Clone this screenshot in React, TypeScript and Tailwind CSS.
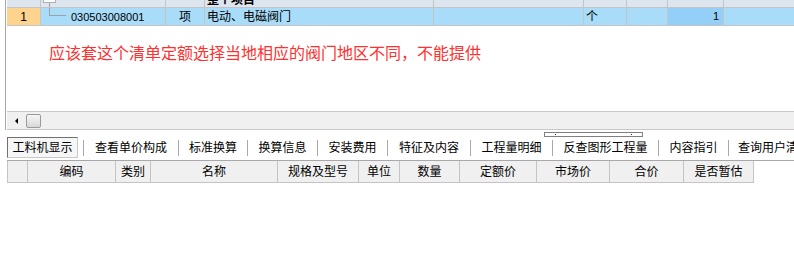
const tabs = [
  { label: "查看单价构成", w: "w-[94px]" },
  { label: "标准换算", w: "w-[68px]" },
  { label: "换算信息", w: "w-[69px]" },
  { label: "安装费用", w: "w-[69px]" },
  { label: "特征及内容", w: "w-[82px]" },
  { label: "工程量明细", w: "w-[81px]" },
  { label: "反查图形工程量", w: "w-[105px]" },
  { label: "内容指引", w: "w-[69px]" },
];

const gridCols = [
  { label: "", w: "w-[20px]" },
  { label: "编码", w: "w-[88px]" },
  { label: "类别", w: "w-[35px]" },
  { label: "名称", w: "w-[127px]" },
  { label: "规格及型号", w: "w-[81px]" },
  { label: "单位", w: "w-[41px]" },
  { label: "数量", w: "w-[60px]" },
  { label: "定额价", w: "w-[77px]" },
  { label: "市场价", w: "w-[73px]" },
  { label: "合价", w: "w-[74px]" },
  { label: "是否暂估", w: "w-[70px]" },
];

const cell = "h-full border-r border-[#c4c4c4] shrink-0";

function TopGrid() {
  return (
    <div className="ml-[5px] border-l border-[#a8a8a8] pl-[1px] h-[130px] flex flex-col overflow-hidden">
      {/* header row, only its lower edge shows */}
      <div className="-mt-[12px] h-[20px] flex bg-[#dde5ef] border-b border-[#c4c4c4] shrink-0">
        <div className={`${cell} w-[34px]`} />
        <div className={`${cell} w-[125px] flex items-end`}>
          <div className="ml-[2px] flex flex-col items-center">
            <div className="w-[13px] h-[11px] border border-[#b0b0b0] bg-[#fafafa]" />
            <div className="w-px h-[4px] bg-[#a0a0a0]" />
          </div>
        </div>
        <div className={`${cell} w-[39px]`} />
        <div className={`${cell} w-[229px] flex items-end pl-[2px] text-[12px] font-bold leading-none pb-[1px]`}>
          整个项目
        </div>
        <div className={`${cell} w-[150px]`} />
        <div className={`${cell} w-[43px]`} />
        <div className={`${cell} w-[41px]`} />
        <div className={`${cell} w-[56px]`} />
        <div className="flex-1" />
      </div>

      {/* selected data row */}
      <div className="h-[18px] flex bg-[#a9dcf8] border-b border-[#c4c4c4] shrink-0 text-[12px] text-black">
        <div className={`${cell} w-[34px] bg-[#fdd38d] flex items-center justify-center`}>1</div>
        <div className={`${cell} w-[125px] flex items-start`}>
          <div className="ml-[8px] w-[17px] h-[8px] border-l border-b border-[#a0a0a0]" />
          <span className="ml-[5px] mt-[1px] text-[11px] leading-[16px]">030503008001</span>
        </div>
        <div className={`${cell} w-[39px] flex items-center justify-center`}>项</div>
        <div className={`${cell} w-[229px] flex items-center pl-[2px]`}>电动、电磁阀门</div>
        <div className={`${cell} w-[150px]`} />
        <div className={`${cell} w-[43px] flex items-center pl-[2px]`}>个</div>
        <div className={`${cell} w-[41px]`} />
        <div className={`${cell} w-[56px] bg-[#94cff7] flex items-center justify-end pr-[4px] text-[11px]`}>1</div>
        <div className="flex-1" />
      </div>

      <div className="h-[85px] shrink-0 pt-[20px] pl-[42px]">
        <p className="text-[16px] leading-[16px] text-[#ff3030]">
          应该套这个清单定额选择当地相应的阀门地区不同，不能提供
        </p>
      </div>

      {/* horizontal scrollbar */}
      <div className="h-[19px] shrink-0 bg-[#f0f0f0] border-y border-[#c8c8c8] flex items-center">
        <div className="ml-[8px] w-0 h-0 border-y-[3px] border-y-transparent border-r-[3px] border-r-black" />
        <div className="ml-[8px] w-[15px] h-[14px] rounded-[2px] border border-[#9a9a9a] bg-gradient-to-b from-[#f6f6f6] to-[#d8d8d8]" />
      </div>
    </div>
  );
}

function TabBar() {
  return (
    <div className="h-[24px] flex items-start border-b border-[#a8a8a8] ml-[7px] text-[12px] text-black">
      <div className="w-[71px] h-[21px] shrink-0 border border-[#707070] border-b-[#c8c8c8] border-r-[#c8c8c8] bg-[#f6f6f6] flex items-center justify-center">
        工料机显示
      </div>
      <div className="w-[5px] shrink-0" />
      <div className="mt-[3px] w-px h-[16px] bg-[#a8a8a8] shrink-0" />
      {tabs.map((t) => (
        <div key={t.label} className="flex shrink-0">
          <div className={`${t.w} h-[21px] flex items-center justify-center`}>{t.label}</div>
          <div className="mt-[3px] w-px h-[16px] bg-[#a8a8a8]" />
        </div>
      ))}
      <div className="h-[21px] pl-[9px] flex items-center whitespace-nowrap">查询用户清单</div>
    </div>
  );
}

function BottomGrid() {
  return (
    <div className="ml-[7px] flex">
      <div className="h-[22px] flex border-l border-b border-[#c4c4c4] bg-[#f0f0f0] text-[12px] text-black">
        {gridCols.map((c, i) => (
          <div key={i} className={`${cell} ${c.w} flex items-center justify-center`}>
            {c.label}
          </div>
        ))}
      </div>
    </div>
  );
}

export default function App() {
  return (
    <div className="w-[794px] h-[255px] overflow-hidden bg-white font-['Liberation_Sans','Noto_Sans_CJK_SC',sans-serif]">
      <TopGrid />
      <div className="h-[7px] pt-[2px] pl-[544px]">
        <div className="w-[99px] h-[5px] border border-[#808080] flex items-center justify-between px-[10px]">
          <div className="w-px h-px bg-[#2020c0]" />
          <div className="w-px h-px bg-[#2020c0]" />
        </div>
      </div>
      <TabBar />
      <BottomGrid />
    </div>
  );
}
